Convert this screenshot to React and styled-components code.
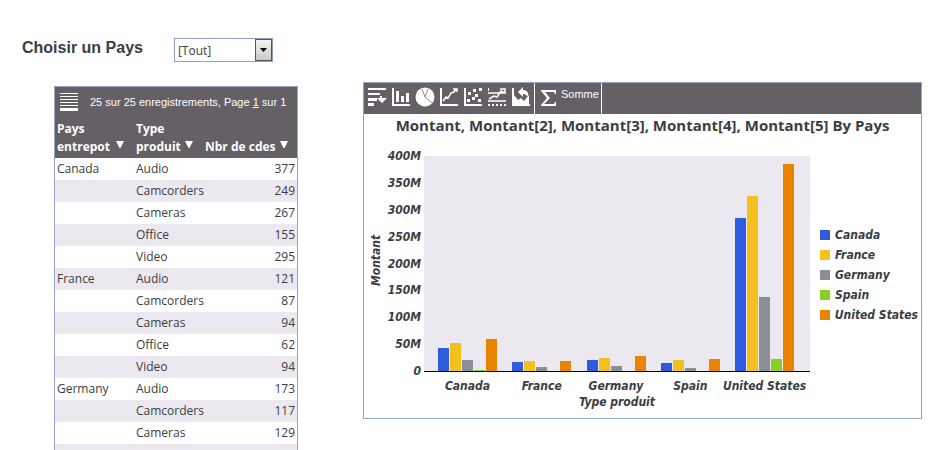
import styled, { createGlobalStyle } from "styled-components";
import { useState } from "react";

const GlobalStyle = createGlobalStyle`
  * {
    box-sizing: border-box;
  }
  body {
    margin: 0;
    background-color: white;
    color: #3a3e42;
    font-family: "Open Sans", sans-serif;
    font-size: 12px;
  }
`;

const Page = styled.main`
  display: flex;
  align-items: flex-start;
  gap: 65px;
  height: 100vh;
  overflow: hidden;
  padding: 38px 9px 0 22px;
`;

const Side = styled.div`
  flex: none;
`;

const Filter = styled.div`
  display: flex;
  align-items: flex-start;
  gap: 31px;
  label {
    font-family: "Liberation Sans", sans-serif;
    font-size: 16px;
    font-weight: bold;
    line-height: 20px;
  }
`;

const SelectBox = styled.div`
  position: relative;
  width: 99px;
  height: 24px;
  select {
    appearance: none;
    width: 100%;
    height: 100%;
    padding: 1px 20px 0 3px;
    border: 1px solid #8fa0bd;
    border-radius: 0;
    background-color: white;
    color: #3a3e42;
    font: inherit;
  }
`;

const DropArrow = styled.span`
  position: absolute;
  top: 1px;
  right: 1px;
  width: 17px;
  height: 22px;
  display: flex;
  justify-content: center;
  align-items: center;
  border: 1px solid #555;
  background: linear-gradient(#f4f4f4, #c8c8c8);
  pointer-events: none;
`;

const Report = styled.section`
  margin: 24px 0 0 32px;
  width: 244px;
  border: 1px solid #93a5c0;
  a {
    color: white;
  }
`;

const ReportBar = styled.div`
  display: flex;
  align-items: center;
  gap: 12px;
  height: 33px;
  padding: 0 5px 4px;
  background-color: #646066;
  color: white;
  font-family: "Liberation Sans", sans-serif;
  font-size: 11px;
  p {
    margin: 0;
    white-space: nowrap;
  }
`;

const IconButton = styled.button`
  display: flex;
  align-items: center;
  padding: 0;
  border: none;
  background: none;
  color: white;
`;

const Table = styled.table`
  width: 100%;
  table-layout: fixed;
  border-collapse: collapse;
  th {
    height: 38px;
    padding: 0 2px 2px;
    background-color: #646066;
    vertical-align: bottom;
  }
  td {
    height: 22px;
    padding: 0 2px 2px;
    white-space: nowrap;
  }
  tbody tr:nth-child(even) {
    background-color: #ebe9ef;
  }
`;

const Number = styled.td`
  text-align: right;
`;

const SortButton = styled.button`
  display: flex;
  align-items: flex-end;
  gap: ${(props) => props.$gap}px;
  padding: 0;
  border: none;
  background: none;
  color: white;
  font: inherit;
  font-weight: bold;
  line-height: 18px;
  text-align: left;
  svg {
    flex: none;
    margin-bottom: 7px;
  }
`;

const Panel = styled.section`
  flex: 1;
  min-width: 0;
  margin-top: 44px;
  border: 1px solid #93a5c0;
`;

const Toolbar = styled.div`
  display: flex;
  align-items: center;
  height: 31px;
  background-color: #646066;
`;

const Tools = styled.div`
  display: flex;
  align-items: center;
  gap: 6px;
  height: 100%;
  padding: 0 4px 3px;
  border-right: 1px solid white;
`;

const SumButton = styled(IconButton)`
  gap: 4px;
  height: 100%;
  padding: 0 2px 2px 6px;
  border-right: 1px solid white;
  font-family: "Liberation Sans", sans-serif;
  font-size: 11px;
  span {
    align-self: flex-start;
    line-height: 22px;
  }
`;

const Title = styled.h2`
  margin: 0;
  font-size: 15px;
  line-height: 22px;
  text-align: center;
  white-space: nowrap;
`;

const Chart = styled.div`
  display: flex;
  align-items: flex-start;
  padding: 12px 3px 8px 4px;
  font-family: "DejaVu Sans Condensed", "DejaVu Sans", sans-serif;
  font-size: 12px;
  font-weight: bold;
  font-style: italic;
  line-height: 16px;
`;

const AxisName = styled.div`
  flex: none;
  height: 224px;
  width: 16px;
  writing-mode: vertical-rl;
  transform: rotate(180deg);
  text-align: center;
`;

const Scale = styled.div`
  flex: none;
  display: flex;
  flex-direction: column;
  justify-content: space-between;
  width: 37px;
  height: 231px;
  text-align: right;
`;

const Graph = styled.div`
  flex: 1;
  margin: 8px 10px 0 3px;
`;

const Plot = styled.div`
  display: flex;
  justify-content: space-between;
  height: 216px;
  padding: 0 16px 0 14px;
  border-bottom: 1px solid black;
  background-color: #ebe9ef;
`;

const Group = styled.div`
  display: flex;
  align-items: flex-end;
  gap: 1px;
`;

const Bar = styled.div`
  width: 11px;
  background-color: ${(props) => props.$color};
`;

const Names = styled.div`
  display: flex;
  justify-content: space-between;
  padding: 6px 16px 0 14px;
`;

const Name = styled.span`
  display: flex;
  justify-content: center;
  width: 59px;
  white-space: nowrap;
`;

const GraphName = styled.div`
  text-align: center;
`;

const Legend = styled.ul`
  flex: none;
  margin: 77px 0 0;
  padding: 0;
  width: 98px;
  list-style: none;
  li {
    display: flex;
    align-items: center;
    gap: 5px;
    height: 20px;
    white-space: nowrap;
  }
`;

const Swatch = styled.span`
  width: 10px;
  height: 10px;
  background-color: ${(props) => props.$color};
`;

const rows = [
  ["Canada", "Audio", 377],
  ["", "Camcorders", 249],
  ["", "Cameras", 267],
  ["", "Office", 155],
  ["", "Video", 295],
  ["France", "Audio", 121],
  ["", "Camcorders", 87],
  ["", "Cameras", 94],
  ["", "Office", 62],
  ["", "Video", 94],
  ["Germany", "Audio", 173],
  ["", "Camcorders", 117],
  ["", "Cameras", 129],
  ["", "", ""],
];

const colors = ["#2f5bdc", "#f2c11c", "#8a9096", "#8ad022", "#e88400"];

// amounts in millions, one per colour
const groups = [
  { name: "Canada", values: [43, 52, 21, 2, 60] },
  { name: "France", values: [17, 19, 8, 0, 19] },
  { name: "Germany", values: [21, 24, 10, 0, 28] },
  { name: "Spain", values: [15, 21, 6, 0, 22] },
  { name: "United States", values: [285, 325, 138, 22, 385] },
];

const ticks = ["400M", "350M", "300M", "250M", "200M", "150M", "100M", "50M", "0"];

const tools = [
  {
    label: "Barres horizontales",
    icon: (
      <path
        d="M0 0h18v2H0zM0 5h12v2H0zM0 10h9v3H0zM0 15h6v3H0zM12 8h2v2h5l-5 5-5-5h3z"
        fill="currentColor"
      />
    ),
  },
  {
    label: "Barres verticales",
    icon: (
      <path
        d="M0 0h2v16h16v2H0zM4 3h3v11H4zM9 8h3v6H9zM14 5h3v9h-3z"
        fill="currentColor"
      />
    ),
  },
  {
    label: "Secteurs",
    icon: (
      <>
        <circle cx="9" cy="9" r="9.500" fill="currentColor" />
        <path d="M6 1l3 8L12 1M9 9l7 6" fill="none" stroke="#8d8a90" />
      </>
    ),
  },
  {
    label: "Courbes",
    icon: (
      <>
        <path d="M0 0h2v16h16v2H0z" fill="currentColor" />
        <path
          d="M3 13l3-4 2 1 3-5 3-1 2-3M13 1h4v3"
          fill="none"
          stroke="currentColor"
          strokeWidth="1.500"
        />
      </>
    ),
  },
  {
    label: "Nuage de points",
    icon: (
      <path
        d="M0 0h2v16h16v2H0zM4 4h3v3H4zM9 1h3v3H9zM15 0h3v3h-3zM11 6h3v3h-3zM3 11h3v3H3zM8 9h3v3H8zM14 11h3v3h-3z"
        fill="currentColor"
      />
    ),
  },
  {
    label: "Courbes empilées",
    icon: (
      <>
        <path
          d="M0 5h18M0 13h18M1 11l5-3 3 1 4-6 4 2M12 1h5v3"
          fill="none"
          stroke="currentColor"
          strokeWidth="1.500"
        />
        <path
          d="M0 0h1v3H0zM0 16h2v2H0zM4 16h2v2H4zM8 16h2v2H8zM12 16h2v2h-2zM16 16h2v2h-2z"
          fill="currentColor"
        />
      </>
    ),
  },
  {
    label: "Aires",
    icon: (
      <>
        <path d="M0 0h2v16h16v2H0zM2 7l4 5 3-2 3 3 5-6v10H2z" fill="currentColor" />
        <path d="M6 4l5-5v3c4 0 6 3 5 7-1-2-3-3-5-3v3z" fill="currentColor" />
      </>
    ),
  },
];

const SortArrow = () => (
  <svg width="8" height="8" viewBox="0 0 8 8" aria-hidden="true">
    <path d="M0 0h8L4.500 7h-1z" fill="currentColor" />
  </svg>
);

const App = () => {
  const [country, setCountry] = useState("all");

  return (
    <Page>
      <GlobalStyle />
      <Side>
        <Filter>
          <label htmlFor="country">Choisir un Pays</label>
          <SelectBox>
            <select
              id="country"
              value={country}
              onChange={(e) => setCountry(e.target.value)}
            >
              <option value="all">[Tout]</option>
            </select>
            <DropArrow>
              <svg width="7" height="4" viewBox="0 0 7 4">
                <path d="M0 0h7L3.500 4z" fill="black" />
              </svg>
            </DropArrow>
          </SelectBox>
        </Filter>

        <Report>
          <ReportBar>
            <IconButton aria-label="Menu">
              <svg width="18" height="18" viewBox="0 0 18 18">
                <path
                  d="M0 0h18v1H0zM0 3h18v1H0zM0 6h18v1H0zM0 9h18v1H0zM0 12h18v1H0zM0 15h18v3H0z"
                  fill="currentColor"
                />
              </svg>
            </IconButton>
            <p>
              25 sur 25 enregistrements, Page <a href="#page">1</a> sur 1
            </p>
          </ReportBar>
          <Table>
            <colgroup>
              <col width="79" />
              <col width="69" />
              <col />
            </colgroup>
            <thead>
              <tr>
                <th>
                  <SortButton $gap={6}>
                    Pays
                    <br />
                    entrepot
                    <SortArrow />
                  </SortButton>
                </th>
                <th>
                  <SortButton $gap={4}>
                    Type
                    <br />
                    produit
                    <SortArrow />
                  </SortButton>
                </th>
                <th>
                  <SortButton $gap={4}>
                    Nbr de cdes
                    <SortArrow />
                  </SortButton>
                </th>
              </tr>
            </thead>
            <tbody>
              {rows.map(([place, type, count], i) => (
                <tr key={i}>
                  <td>{place}</td>
                  <td>{type}</td>
                  <Number>{count}</Number>
                </tr>
              ))}
            </tbody>
          </Table>
        </Report>
      </Side>

      <Panel>
        <Toolbar>
          <Tools>
            {tools.map((tool) => (
              <IconButton key={tool.label} aria-label={tool.label}>
                <svg width="18" height="18" viewBox="0 0 18 18" overflow="visible">
                  {tool.icon}
                </svg>
              </IconButton>
            ))}
          </Tools>
          <SumButton>
            <svg width="16" height="18" viewBox="0 0 16 18">
              <path
                d="M0 1h15v4h-1l-1-2H4l5 6-6 6h10l1-2h1v4H0v-1l6-7-6-7z"
                fill="currentColor"
              />
            </svg>
            <span>Somme</span>
          </SumButton>
        </Toolbar>
        <Title>Montant, Montant[2], Montant[3], Montant[4], Montant[5] By Pays</Title>
        <Chart>
          <AxisName>Montant</AxisName>
          <Scale>
            {ticks.map((tick) => (
              <span key={tick}>{tick}</span>
            ))}
          </Scale>
          <Graph>
            <Plot>
              {groups.map((group) => (
                <Group key={group.name}>
                  {group.values.map((value, i) => (
                    <Bar
                      key={i}
                      $color={colors[i]}
                      style={{ height: `${value / 4}%` }}
                    />
                  ))}
                </Group>
              ))}
            </Plot>
            <Names>
              {groups.map((group) => (
                <Name key={group.name}>{group.name}</Name>
              ))}
            </Names>
            <GraphName>Type produit</GraphName>
          </Graph>
          <Legend>
            {groups.map((group, i) => (
              <li key={group.name}>
                <Swatch $color={colors[i]} />
                {group.name}
              </li>
            ))}
          </Legend>
        </Chart>
      </Panel>
    </Page>
  );
};

export default App;
